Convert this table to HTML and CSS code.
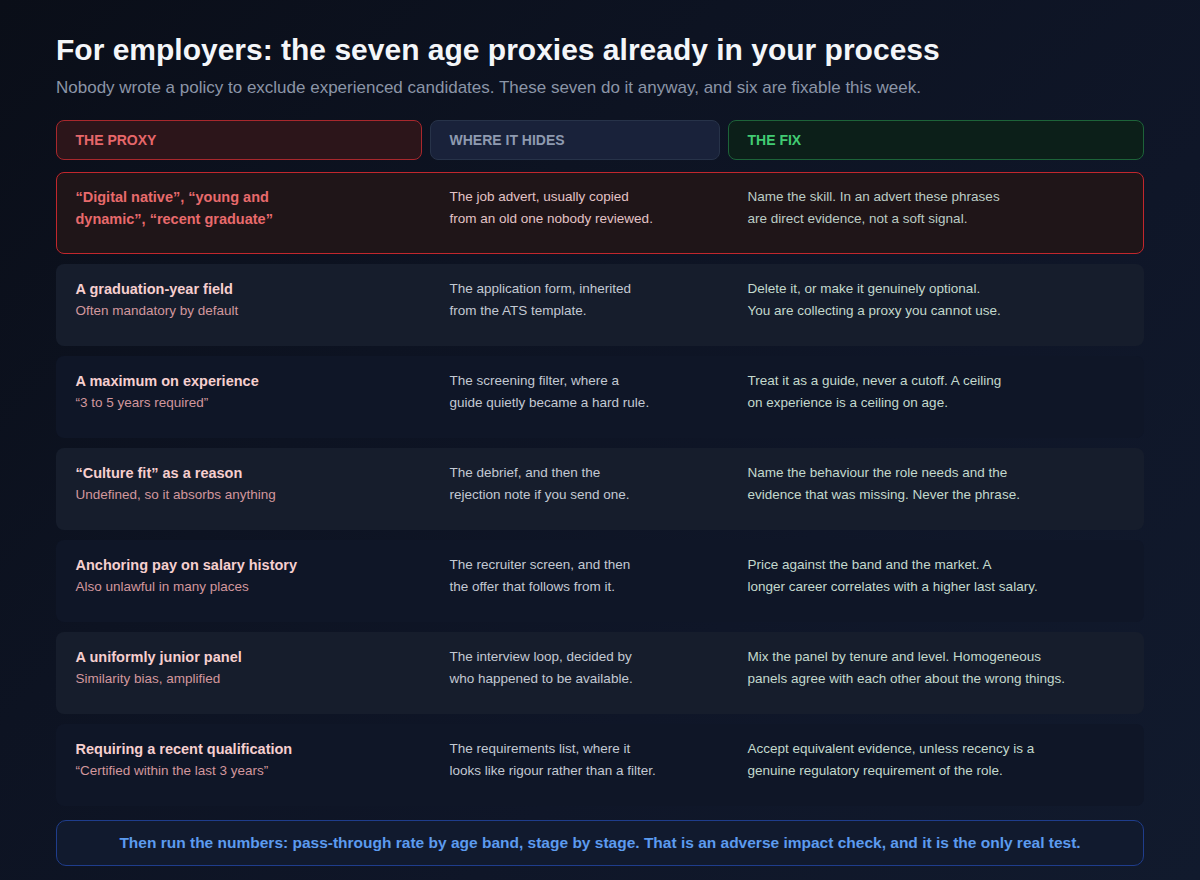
FILE: index.html
```html
<!DOCTYPE html>
<html lang="en">
<head>
<meta charset="utf-8">
<title>Age proxies</title>
<link rel="stylesheet" href="styles.css">
</head>
<body>
<main class="page">
  <h1 class="title">For employers: the seven age proxies already in your process</h1>
  <p class="subtitle">Nobody wrote a policy to exclude experienced candidates. These seven do it anyway, and six are fixable this week.</p>

  <div class="head-row">
    <div class="head head-proxy">THE PROXY</div>
    <div class="head head-where">WHERE IT HIDES</div>
    <div class="head head-fix">THE FIX</div>
  </div>

  <div class="rows">
    <div class="row row-alert">
      <div class="cell cell-proxy"><div class="proxy-title alert-title">“Digital native”, “young and dynamic”, “recent graduate”</div></div>
      <div class="cell cell-where">The job advert, usually copied<br>from an old one nobody reviewed.</div>
      <div class="cell cell-fix">Name the skill. In an advert these phrases<br>are direct evidence, not a soft signal.</div>
    </div>
    <div class="row row-light">
      <div class="cell cell-proxy"><div class="proxy-title">A graduation-year field</div><div class="proxy-sub">Often mandatory by default</div></div>
      <div class="cell cell-where">The application form, inherited<br>from the ATS template.</div>
      <div class="cell cell-fix">Delete it, or make it genuinely optional.<br>You are collecting a proxy you cannot use.</div>
    </div>
    <div class="row row-dark">
      <div class="cell cell-proxy"><div class="proxy-title">A maximum on experience</div><div class="proxy-sub">“3 to 5 years required”</div></div>
      <div class="cell cell-where">The screening filter, where a<br>guide quietly became a hard rule.</div>
      <div class="cell cell-fix">Treat it as a guide, never a cutoff. A ceiling<br>on experience is a ceiling on age.</div>
    </div>
    <div class="row row-light">
      <div class="cell cell-proxy"><div class="proxy-title">“Culture fit” as a reason</div><div class="proxy-sub">Undefined, so it absorbs anything</div></div>
      <div class="cell cell-where">The debrief, and then the<br>rejection note if you send one.</div>
      <div class="cell cell-fix">Name the behaviour the role needs and the<br>evidence that was missing. Never the phrase.</div>
    </div>
    <div class="row row-dark">
      <div class="cell cell-proxy"><div class="proxy-title">Anchoring pay on salary history</div><div class="proxy-sub">Also unlawful in many places</div></div>
      <div class="cell cell-where">The recruiter screen, and then<br>the offer that follows from it.</div>
      <div class="cell cell-fix">Price against the band and the market. A<br>longer career correlates with a higher last salary.</div>
    </div>
    <div class="row row-light">
      <div class="cell cell-proxy"><div class="proxy-title">A uniformly junior panel</div><div class="proxy-sub">Similarity bias, amplified</div></div>
      <div class="cell cell-where">The interview loop, decided by<br>who happened to be available.</div>
      <div class="cell cell-fix">Mix the panel by tenure and level. Homogeneous<br>panels agree with each other about the wrong things.</div>
    </div>
    <div class="row row-dark">
      <div class="cell cell-proxy"><div class="proxy-title">Requiring a recent qualification</div><div class="proxy-sub">“Certified within the last 3 years”</div></div>
      <div class="cell cell-where">The requirements list, where it<br>looks like rigour rather than a filter.</div>
      <div class="cell cell-fix">Accept equivalent evidence, unless recency is a<br>genuine regulatory requirement of the role.</div>
    </div>
  </div>

  <div class="footer">Then run the numbers: pass-through rate by age band, stage by stage. That is an adverse impact check, and it is the only real test.</div>
</main>
</body>
</html>
```

FILE: styles.css
```css
* { box-sizing: border-box; }
html, body { margin: 0; padding: 0; }
body {
  width: 1200px;
  height: 880px;
  overflow: hidden;
  font-family: "Liberation Sans", Arial, sans-serif;
  background: linear-gradient(135deg, #0a0e18 0%, #0d1322 35%, #0f1628 65%, #111a2d 100%);
  color: #e6e9ef;
}
.page {
  padding: 32px 56px 0 56px;
}
.title {
  margin: 0;
  font-size: 30px;
  line-height: 36px;
  font-weight: 700;
  color: #f4f6f9;
}
.subtitle {
  margin: 8px 0 0 0;
  font-size: 17px;
  line-height: 24px;
  color: #8b95a7;
}
.head-row {
  margin-top: 20px;
  display: grid;
  grid-template-columns: 366px 290px 1fr;
  column-gap: 8px;
}
.head {
  height: 40px;
  border-radius: 8px;
  border: 1.5px solid;
  padding: 0 18.5px;
  display: flex;
  align-items: center;
  font-size: 14px;
  font-weight: 700;
}
.head-proxy { background: #2c151a; border-color: #a8282d; color: #e6676a; }
.head-where { background: #19223a; border-color: #273349; color: #8e9ab0; }
.head-fix { background: #0c1f19; border-color: #1d6339; color: #41cc73; }

.rows {
  margin-top: 12px;
  display: flex;
  flex-direction: column;
  gap: 10px;
}
.row {
  display: grid;
  grid-template-columns: 374px 298px 1fr;
  height: 82px;
  border-radius: 8px;
  padding: 12.5px 0;
  border: 1.5px solid transparent;
}
.row-alert {
  background: #1f1518;
  border-color: #c1272d;
}
.row-light { background: #161d2c; }
.row-dark { background: #0f1627; }
.cell {
  padding: 0 18.5px;
  font-size: 13.5px;
  line-height: 22px;
}
.proxy-title {
  font-size: 14.5px;
  font-weight: 700;
  color: #f6cfcf;
  line-height: 22px;
}
.alert-title { color: #e86a6c; max-width: 225px; }
.proxy-sub {
  font-size: 13.5px;
  color: #d2979d;
  line-height: 22px;
}
.cell-where { color: #c3c9d3; }
.row-alert .cell-where { color: #e3c3c6; }
.cell-fix { color: #c3d9cd; }
.row-alert .cell-fix { color: #bcccc5; }

.footer {
  margin-top: 14px;
  height: 46px;
  border: 1.5px solid #1f3d8c;
  border-radius: 10px;
  background: #111a2e;
  color: #5c9bef;
  font-size: 15.5px;
  font-weight: 700;
  display: flex;
  align-items: center;
  justify-content: center;
}
```
